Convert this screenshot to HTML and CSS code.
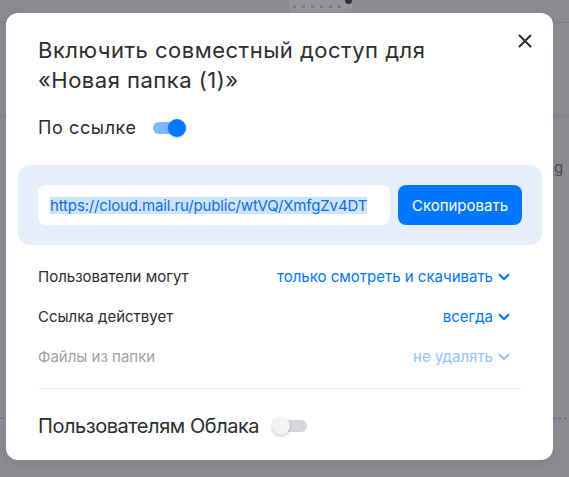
FILE: index.html
```html
<!DOCTYPE html>
<html lang="ru">
<head>
<meta charset="utf-8">
<title>Совместный доступ</title>
<link rel="stylesheet" href="styles.css">
</head>
<body>
<div class="backdrop">
  <div class="bg-toolbar"><span></span><span></span><span></span><span></span><span></span><span></span></div>
  <div class="bg-dot"></div>
  <div class="bg-g">g</div>
</div>
<div class="overlay">
  <div class="modal">
    <button class="close" aria-label="Закрыть">
      <svg width="14" height="14" viewBox="0 0 14 14"><path d="M1.5 1.5 L12.5 12.5 M12.5 1.5 L1.5 12.5" stroke="#2c2d2e" stroke-width="2" stroke-linecap="round"/></svg>
    </button>
    <h1 class="title">Включить совместный доступ для<br>«Новая папка (1)»</h1>
    <div class="switch-row">
      <span class="switch-label">По ссылке</span>
      <span class="toggle toggle-on"><span class="knob"></span></span>
    </div>
    <div class="link-box">
      <div class="link-input"><span class="link-text">https://cloud.mail.ru/public/wtVQ/XmfgZv4DT</span></div>
      <button class="copy-btn">Скопировать</button>
    </div>
    <div class="opt-row">
      <span class="opt-label">Пользователи могут</span>
      <span class="opt-value">только смотреть и скачивать <svg class="chev" width="12" height="8" viewBox="0 0 12 8"><path d="M1.5 1.8 L6 6 L10.5 1.8" fill="none" stroke="currentColor" stroke-width="2" stroke-linecap="round" stroke-linejoin="round"/></svg></span>
    </div>
    <div class="opt-row">
      <span class="opt-label">Ссылка действует</span>
      <span class="opt-value">всегда <svg class="chev" width="12" height="8" viewBox="0 0 12 8"><path d="M1.5 1.8 L6 6 L10.5 1.8" fill="none" stroke="currentColor" stroke-width="2" stroke-linecap="round" stroke-linejoin="round"/></svg></span>
    </div>
    <div class="opt-row disabled">
      <span class="opt-label">Файлы из папки</span>
      <span class="opt-value">не удалять <svg class="chev" width="12" height="8" viewBox="0 0 12 8"><path d="M1.5 1.8 L6 6 L10.5 1.8" fill="none" stroke="currentColor" stroke-width="2" stroke-linecap="round" stroke-linejoin="round"/></svg></span>
    </div>
    <div class="divider"></div>
    <div class="switch-row cloud-row">
      <span class="cloud-label">Пользователям Облака</span>
      <span class="toggle toggle-off"><span class="knob"></span></span>
    </div>
  </div>
</div>
</body>
</html>
```

FILE: styles.css
```css
* { box-sizing: border-box; }
html, body { margin: 0; padding: 0; }
body {
  width: 569px;
  height: 477px;
  overflow: hidden;
  font-family: Inter, "Noto Sans", sans-serif;
  color: #2c2d2e;
  background-color: #8b8c91;
  background-image:
    linear-gradient(#7f8085, #7f8085),
    linear-gradient(#a0868c, #a0868c),
    linear-gradient(#a0868c, #a0868c),
    linear-gradient(#818287, #818287),
    repeating-linear-gradient(90deg, #3f6fb8 0 3px, transparent 3px 6px);
  background-size: 569px 1px, 569px 1px, 569px 1px, 569px 1px, 569px 1px;
  background-position: 0 22px, 0 52px, 0 67px, 0 115px, 0 418px;
  background-repeat: no-repeat;
  position: relative;
}
.backdrop { position: absolute; inset: 0; }
.bg-toolbar {
  position: absolute; left: 289px; top: 0; width: 63px; height: 12px;
  background: #95969b; border-radius: 0 0 3px 3px;
  display: flex; gap: 6px; align-items: center; padding: 0 4px;
}
.bg-toolbar span { width: 3px; height: 3px; background: #7a7b80; border-radius: 1px; }
.bg-dot { position: absolute; left: 345px; top: -3px; width: 7px; height: 7px; border-radius: 50%; background: #2e2f33; }
.bg-g { position: absolute; left: 554px; top: 158px; font-size: 15px; color: #4a4b50; }

.overlay {
  position: absolute; inset: 0;
  padding: 13px 0 0 6px;
}
.modal {
  position: relative;
  width: 547px;
  height: 447px;
  background: #fff;
  border-radius: 12px;
  padding: 22px 31px 0 32px;
  box-shadow: 0 2px 8px rgba(0,0,0,0.08);
}
.close {
  position: absolute; top: 20px; right: 20px;
  width: 16px; height: 16px; padding: 1px; border: 0; background: none;
  display: flex; align-items: center; justify-content: center;
}
.title {
  margin: 0;
  font-size: 22px;
  line-height: 30px;
  font-weight: 400;
  letter-spacing: 0.5px;
  color: #2c2d2e;
}
.switch-row {
  display: flex; align-items: center; gap: 16px;
  height: 24px; margin-top: 21px;
}
.switch-label { font-size: 18px; line-height: 24px; letter-spacing: 0.6px; }
.toggle {
  position: relative; display: inline-block;
  width: 32px; height: 12px; border-radius: 6px;
}
.toggle .knob {
  position: absolute; top: -3px; width: 18px; height: 18px; border-radius: 50%;
}
.toggle-on { background: #7fb6ff; }
.toggle-on .knob { right: -1px; background: #0077ff; box-shadow: 0 1px 3px rgba(0,0,0,0.2); }
.toggle-off { background: #d6d7da; }
.toggle-off .knob { left: -3px; background: #f2f3f5; box-shadow: 0 1px 3px rgba(0,0,0,0.25); }

.link-box {
  margin: 25px -20px 11px -20px;
  background: #e6f0fd;
  border-radius: 12px;
  padding: 20px;
  display: flex; gap: 8px;
}
.link-input {
  flex: 1;
  height: 40px;
  background: #fff;
  border-radius: 8px;
  display: flex; align-items: center;
  padding: 0 12px;
}
.link-text {
  font-size: 15px; line-height: 17px;
  color: #0a6fe0;
  background: #cfe3fb;
  letter-spacing: -0.15px;
  white-space: nowrap;
}
.copy-btn {
  width: 124px; height: 40px;
  border: 0; border-radius: 8px;
  background: #0077ff; color: #fff;
  font-family: inherit; font-size: 15px;
  padding: 0;
}
.opt-row {
  display: flex; justify-content: space-between; align-items: center;
  height: 40px;
  font-size: 15px;
}
.opt-label { color: #2c2d2e; }
.opt-value { color: #0077ff; display: flex; align-items: center; gap: 5px; padding-right: 12px; }
.chev { display: block; margin-top: 1px; }
.disabled .opt-label { color: #a1a2a6; }
.disabled .opt-value { color: #94c2fd; }
.divider { height: 1px; background: #ececee; margin-top: 12px; }
.cloud-row { margin-top: 23px; height: 28px; gap: 16px; }
.cloud-label { font-size: 20px; line-height: 28px; letter-spacing: -0.45px; }
```
